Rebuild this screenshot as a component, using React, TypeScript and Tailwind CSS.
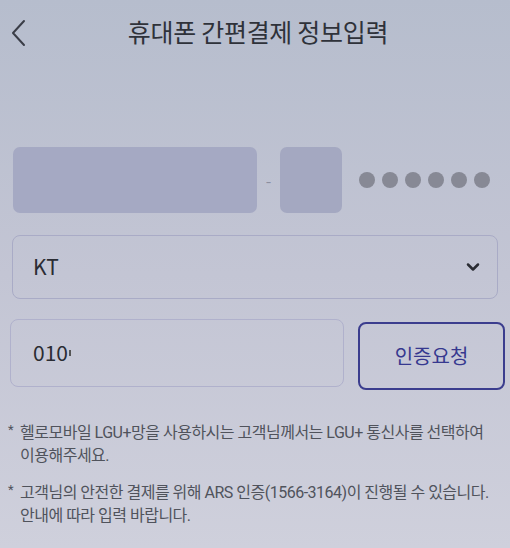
import { ChevronDown } from 'lucide-react'

const font = { fontFamily: '"Noto Sans CJK KR", "Noto Sans", sans-serif' }
const noteFont = { fontFamily: 'Roboto, "Noto Sans CJK KR", sans-serif' }

function BackIcon() {
  return (
    <svg viewBox="0 0 16 28" className="h-[28px] w-[16px]" fill="none">
      <path d="M14 2 L3 14 L14 26" stroke="#3a3d47" strokeWidth="2" strokeLinecap="round" strokeLinejoin="round" />
    </svg>
  )
}

export default function App() {
  return (
    <div
      className="flex h-[548px] w-[510px] flex-col overflow-hidden bg-gradient-to-b from-[#b6bdcd] via-[#c3c5d4] to-[#cfd0dc] text-[#33353d]"
      style={font}
    >
      <header className="grid h-[64px] grid-cols-[64px_1fr_64px] items-center">
        <div className="pl-[10px] pt-[2px]">
          <BackIcon />
        </div>
        <h1 className="pl-[6px] text-center text-[25px] tracking-[-0.3px] text-[#2f323a]">휴대폰 간편결제 정보입력</h1>
        <div />
      </header>

      <div className="mt-[83px] flex items-center pl-[13px]">
        <div className="h-[66px] w-[244px] rounded-[7px] bg-[#a5a9c3]" />
        <span className="w-[23px] text-center text-[16px] text-[#8c8fa0]">-</span>
        <div className="h-[66px] w-[62px] rounded-[7px] bg-[#a4a8c1]" />
        <div className="ml-[17px] flex gap-[7px]">
          {[0, 1, 2, 3, 4, 5].map((i) => (
            <span key={i} className="size-[16px] rounded-full bg-[#878995]" />
          ))}
        </div>
      </div>

      <div className="mx-[12px] mt-[22px] flex h-[64px] items-center justify-between rounded-[8px] border border-[#a9abc6] pl-[20px] pr-[14px]">
        <span className="text-[21px] text-[#2a2c33]">KT</span>
        <ChevronDown className="size-[20px] text-[#2a2c33]" strokeWidth={3} />
      </div>

      <div className="mt-[20px] flex gap-[14px] pl-[10px] pr-[5px]">
        <div className="flex h-[68px] w-[334px] items-center rounded-[8px] border border-[#b0b1cc] pl-[22px]">
          <span className="text-[21px] text-[#2a2c33]">010</span>
          <span className="ml-[1px] h-[6px] w-[2px] bg-[#555]" />
        </div>
        <button className="mt-[3px] flex h-[68px] flex-1 items-center justify-center rounded-[8px] border-2 border-[#3b3d8e] text-[20px] text-[#36388f]">
          인증요청
        </button>
      </div>

      <div
        className="mt-[31px] flex flex-col gap-[14px] whitespace-nowrap pl-[8px] text-[16px] leading-[23px] tracking-[-0.5px] text-[#50535c]"
        style={noteFont}
      >
        <div className="flex">
          <span className="w-[12px] shrink-0 text-[13px] leading-[18px]">*</span>
          <p>
            헬로모바일 LGU+망을 사용하시는 고객님께서는 LGU+ 통신사를 선택하여
            <br />
            이용해주세요.
          </p>
        </div>
        <div className="flex">
          <span className="w-[12px] shrink-0 text-[13px] leading-[18px]">*</span>
          <p>
            고객님의 안전한 결제를 위해 ARS 인증(1566-3164)이 진행될 수 있습니다.
            <br />
            안내에 따라 입력 바랍니다.
          </p>
        </div>
      </div>
    </div>
  )
}
